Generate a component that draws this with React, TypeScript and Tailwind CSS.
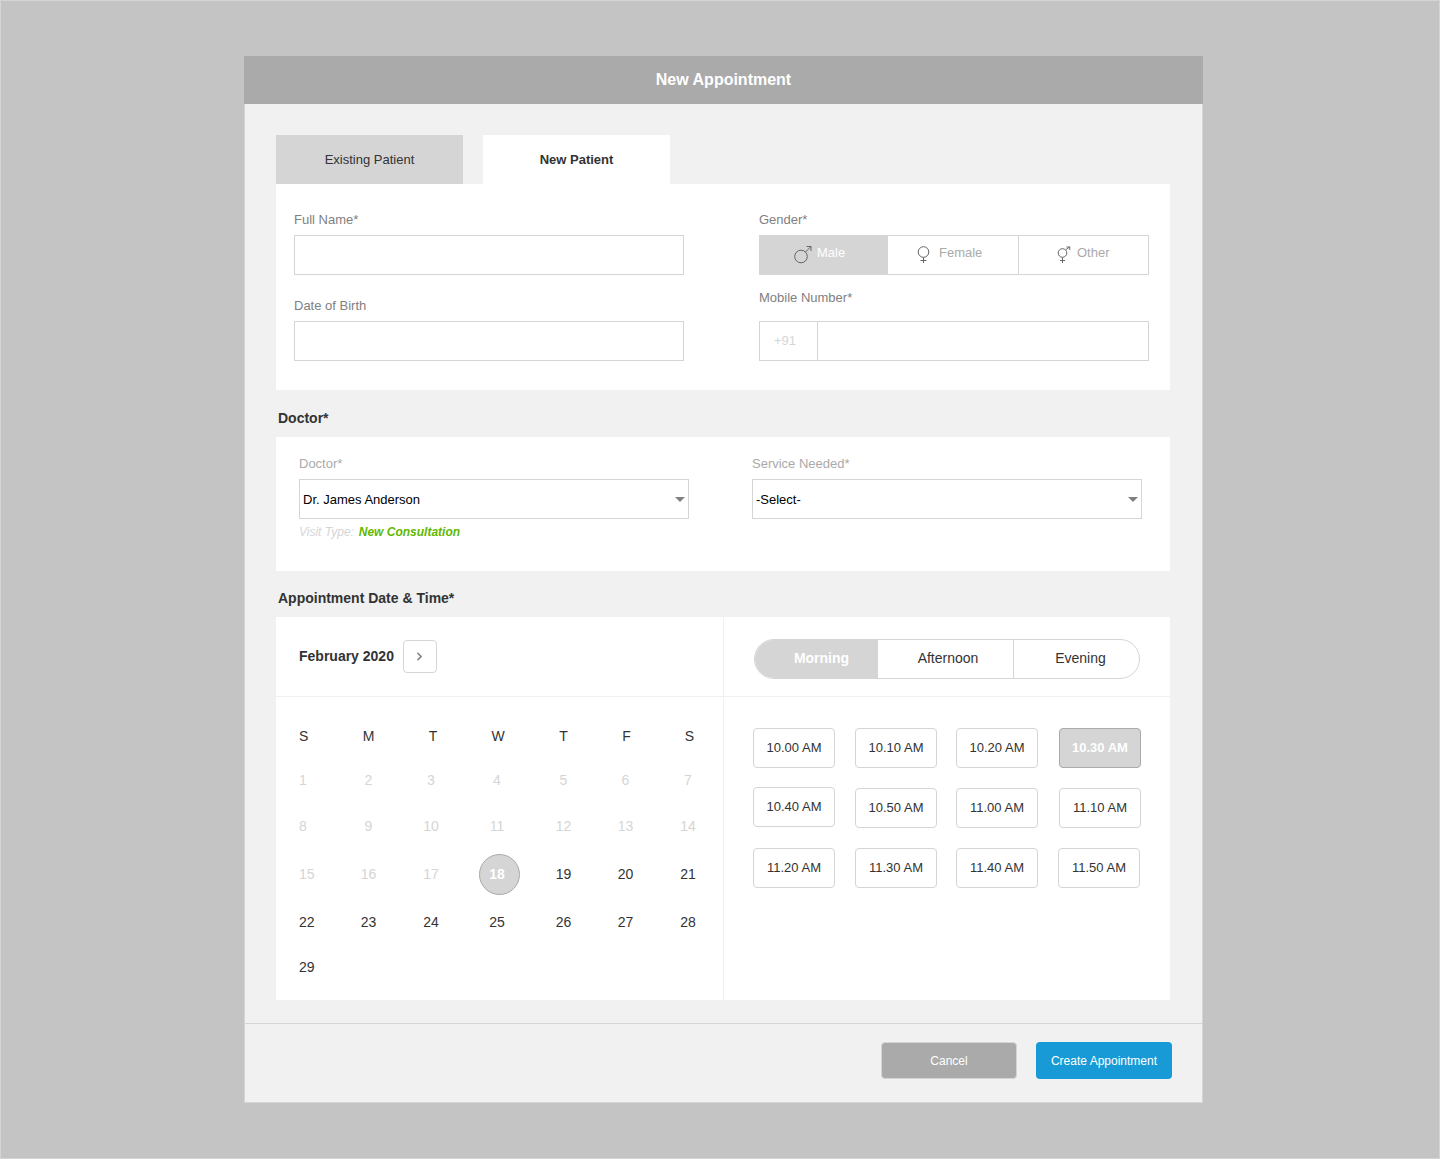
import { ChevronRight } from "lucide-react";

const weekDays = ["S", "M", "T", "W", "T", "F", "S"];

const days = [
  [1, 2, 3, 4, 5, 6, 7],
  [8, 9, 10, 11, 12, 13, 14],
  [15, 16, 17, 18, 19, 20, 21],
  [22, 23, 24, 25, 26, 27, 28],
  [29],
];

const rowHeights = ["h-[44px]", "h-[48px]", "h-[48px]", "h-[48px]", "h-[42px]"];

const slots = [
  "10.00 AM",
  "10.10 AM",
  "10.20 AM",
  "10.30 AM",
  "10.40 AM",
  "10.50 AM",
  "11.00 AM",
  "11.10 AM",
  "11.20 AM",
  "11.30 AM",
  "11.40 AM",
  "11.50 AM",
];

function MaleIcon() {
  return (
    <svg width="18" height="19" viewBox="0 0 18 19" fill="none" stroke="#666" strokeWidth="1" className="-mt-[2px] shrink-0">
      <circle cx="7" cy="11.5" r="6.3" />
      <path d="M11.5 7 17 1.5M12.5 1.5H17V6" />
    </svg>
  );
}

function FemaleIcon() {
  return (
    <svg width="13" height="18" viewBox="0 0 13 18" fill="none" stroke="#666" strokeWidth="1" className="shrink-0">
      <circle cx="6.5" cy="6" r="5.3" />
      <path d="M6.5 11.5V17M3.5 14.5H9.5" />
    </svg>
  );
}

function OtherIcon() {
  return (
    <svg width="14" height="18" viewBox="0 0 14 18" fill="none" stroke="#666" strokeWidth="1" className="shrink-0">
      <circle cx="5.5" cy="7" r="4.3" />
      <path d="M5.5 11.5V17M3 14.5H8M8.7 3.8 12.5 1M9.5 1H12.8V4" />
    </svg>
  );
}

export default function App() {
  return (
    <main className="h-[1159px] border border-[#d5d5d5] bg-[#c4c4c4] pl-[243px] pt-[55px] font-['Liberation_Sans',Arial,sans-serif] text-[13px] text-[#333]">
      <div className="w-[959px] bg-[#f1f1f1]">
        <header className="flex h-[48px] items-center justify-center bg-[#aaaaaa] text-[16px] font-bold text-white">
          New Appointment
        </header>

        <div className="border-x border-b border-[#d5d5d5]">
          <div className="pb-[23px] pl-[31px] pr-[32px] pt-[31px]">
            <div className="flex gap-[20px]">
              <button className="h-[49px] w-[187px] bg-[#d5d5d5] text-[13px]">Existing Patient</button>
              <button className="h-[49px] w-[187px] bg-white text-[13px] font-bold">New Patient</button>
            </div>

            <section className="flex h-[206px] gap-[75px] bg-white pl-[18px] pt-[28px]">
              <div className="w-[390px]">
                <label className="mb-[7px] block text-[13px] leading-[16px] text-[#808080]">Full Name*</label>
                <input className="block h-[40px] w-full border border-[#d5d5d5]" />
                <label className="mb-[7px] mt-[23px] block text-[13px] leading-[16px] text-[#808080]">Date of Birth</label>
                <input className="block h-[40px] w-full border border-[#d5d5d5]" />
              </div>
              <div className="w-[390px]">
                <label className="mb-[7px] block text-[13px] leading-[16px] text-[#808080]">Gender*</label>
                <div className="flex h-[40px] border border-[#d5d5d5]">
                  <div className="flex w-[128px] items-center bg-[#d5d5d5] pl-[34px] text-white">
                    <MaleIcon />
                    <span className="-mt-[4px] ml-[5px]">Male</span>
                  </div>
                  <div className="flex w-[131px] items-center border-r border-[#d5d5d5] pl-[29px] text-[#aaaaaa]">
                    <FemaleIcon />
                    <span className="-mt-[5px] ml-[9px]">Female</span>
                  </div>
                  <div className="flex flex-1 items-center pl-[38px] text-[#aaaaaa]">
                    <OtherIcon />
                    <span className="-mt-[4px] ml-[6px]">Other</span>
                  </div>
                </div>
                <label className="mb-[15px] mt-[15px] block text-[13px] leading-[16px] text-[#808080]">Mobile Number*</label>
                <div className="flex h-[40px] border border-[#d5d5d5]">
                  <span className="flex w-[58px] items-center justify-center border-r border-[#d5d5d5] pr-[7px] text-[#d5d5d5]">+91</span>
                  <input className="min-w-0 flex-1" />
                </div>
              </div>
            </section>

            <h2 className="pb-[10px] pl-[2px] pt-[19px] text-[14px] font-bold leading-[18px]">Doctor*</h2>

            <section className="flex h-[134px] gap-[63px] bg-white pl-[23px] pt-[19px]">
              <div className="w-[390px]">
                <label className="mb-[7px] block text-[13px] leading-[16px] text-[#aaaaaa]">Doctor*</label>
                <div className="relative">
                  <select className="block h-[40px] w-full appearance-none border border-[#d5d5d5] bg-white pl-[3px] pt-[2px] text-[13px] text-black">
                    <option>Dr. James Anderson</option>
                  </select>
                  <span className="absolute right-[4px] top-[18px] border-x-[5px] border-t-[5px] border-x-transparent border-t-[#808080]" />
                </div>
                <p className="mt-[5px] text-[12px] italic leading-[16px] text-[#d5d5d5]">
                  Visit Type: <span className="ml-[1.5px] font-bold text-[#5fb800]">New Consultation</span>
                </p>
              </div>
              <div className="w-[390px]">
                <label className="mb-[7px] block text-[13px] leading-[16px] text-[#aaaaaa]">Service Needed*</label>
                <div className="relative">
                  <select className="block h-[40px] w-full appearance-none border border-[#d5d5d5] bg-white pl-[3px] pt-[2px] text-[13px] text-black">
                    <option>-Select-</option>
                  </select>
                  <span className="absolute right-[4px] top-[18px] border-x-[5px] border-t-[5px] border-x-transparent border-t-[#808080]" />
                </div>
              </div>
            </section>

            <h2 className="pb-[10px] pl-[2px] pt-[18px] text-[14px] font-bold leading-[18px]">Appointment Date &amp; Time*</h2>

            <section className="flex h-[383px] bg-white">
              <div className="w-[448px] border-r border-[#f0f0f0]">
                <div className="flex h-[80px] items-center border-b border-[#f0f0f0] pl-[23px]">
                  <span className="text-[14px] font-bold">February 2020</span>
                  <button className="ml-[9px] flex h-[33px] w-[34px] items-center justify-center rounded-[4px] border border-[#d5d5d5] text-[#808080]">
                    <ChevronRight size={13} strokeWidth={3} />
                  </button>
                </div>
                <div className="pl-[23px] pt-[17px]">
                  <div className="grid h-[44px] grid-cols-[38px_63px_66px_64px_67px_59px_67px] items-center text-[14px]">
                    {weekDays.map((day, i) => (
                      <span key={i} className={i === 0 ? "" : "text-center"}>
                        {day}
                      </span>
                    ))}
                  </div>
                  {days.map((week, r) => (
                    <div key={r} className={`grid grid-cols-[38px_63px_62px_70px_63px_61px_64px] items-center text-[14px] ${rowHeights[r]}`}>
                      {week.map((day, i) => {
                        const disabled = day < 18;
                        if (day === 18) {
                          return (
                            <span key={day} className="relative flex h-full items-center justify-center font-bold text-white">
                              <span className="absolute left-[17px] top-[4px] h-[41px] w-[41px] rounded-full border border-[#aaaaaa] bg-[#d5d5d5]" />
                              <span className="relative">{day}</span>
                            </span>
                          );
                        }
                        return (
                          <span key={day} className={`${i === 0 ? "" : "text-center"} ${disabled ? "text-[#d5d5d5]" : ""}`}>
                            {day}
                          </span>
                        );
                      })}
                    </div>
                  ))}
                </div>
              </div>

              <div className="flex-1">
                <div className="flex h-[80px] border-b border-[#f0f0f0] pl-[30px] pt-[22px]">
                  <div className="flex h-[40px] w-[386px] overflow-hidden rounded-full border border-[#d5d5d5] text-[14px]">
                    <div className="flex w-[123px] items-center justify-center bg-[#d5d5d5] pb-[2px] pl-[10px] font-bold text-white">Morning</div>
                    <div className="flex w-[136px] items-center justify-center border-r border-[#d5d5d5] pb-[2px] pl-[5px]">Afternoon</div>
                    <div className="flex flex-1 items-center justify-center pb-[2px] pl-[8px]">Evening</div>
                  </div>
                </div>
                <div className="grid grid-cols-[102px_101px_103px_82px] gap-y-[20px] pl-[29px] pt-[31px]">
                  {slots.map((slot) => (
                    <button
                      key={slot}
                      className={`h-[40px] w-[82px] rounded-[4px] border text-[13px] ${
                        slot === "10.30 AM"
                          ? "border-[#aaaaaa] bg-[#d5d5d5] font-bold text-white"
                          : "border-[#d5d5d5] bg-white"
                      } ${slot === "10.40 AM" ? "-translate-y-px" : ""} ${slot === "11.50 AM" ? "-translate-x-px" : ""}`}
                    >
                      {slot}
                    </button>
                  ))}
                </div>
              </div>
            </section>
          </div>

          <footer className="flex h-[79px] justify-end gap-[19px] border-t border-[#d5d5d5] pr-[30px] pt-[18px]">
            <button className="h-[37px] w-[136px] rounded-[4px] border border-[#d5d5d5] bg-[#aaaaaa] text-[12px] text-white">Cancel</button>
            <button className="h-[37px] w-[136px] rounded-[4px] bg-[#189ad6] text-[12px] text-white">Create Appointment</button>
          </footer>
        </div>
      </div>
    </main>
  );
}
